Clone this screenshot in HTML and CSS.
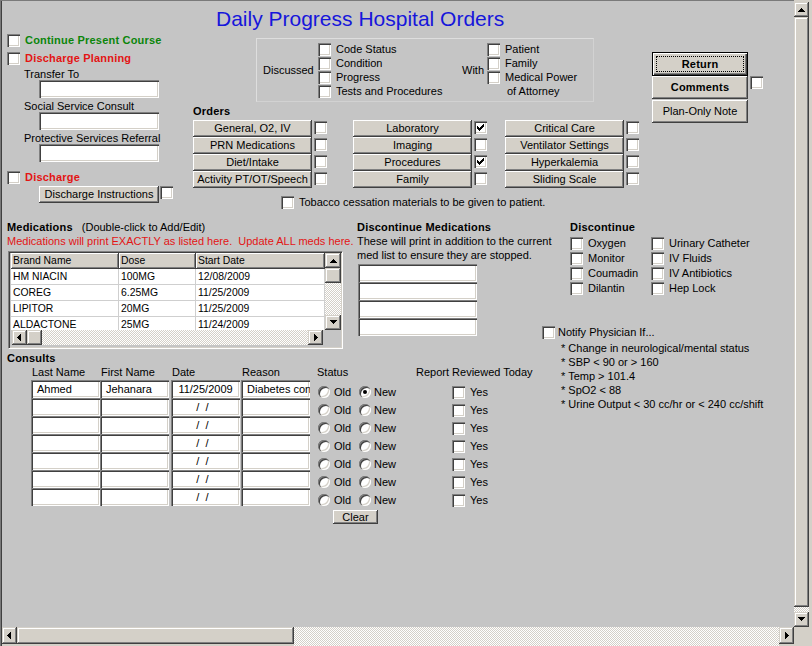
FILE: index.html
```html
<!DOCTYPE html>
<html>
<head>
<meta charset="utf-8">
<title>Daily Progress Hospital Orders</title>
<link rel="stylesheet" href="styles.css">
</head>
<body>
<div class="window">
 <div class="content">
  <h1 class="title">Daily Progress Hospital Orders</h1>
  <div class="top">
   <div class="left-col">
    <div class="cbrow lc1"><span class="cb"></span><span class="lbl bold green">Continue Present Course</span></div>
    <div class="cbrow lc2"><span class="cb"></span><span class="lbl bold red">Discharge Planning</span></div>
    <div class="flabel fl1">Transfer To</div>
    <div class="inp wide"></div>
    <div class="flabel">Social Service Consult</div>
    <div class="inp wide"></div>
    <div class="flabel">Protective Services Referral</div>
    <div class="inp wide"></div>
    <div class="cbrow lc3"><span class="cb"></span><span class="lbl bold red">Discharge</span></div>
    <div class="dirow"><div class="btn di">Discharge Instructions</div><span class="cb"></span></div>
   </div>
   <div class="mid-col">
    <div class="discussed">
     <div class="dlabel">Discussed</div>
     <div class="dcol dcol1">
      <div class="cbrow"><span class="cb"></span><span class="lbl">Code Status</span></div>
      <div class="cbrow"><span class="cb"></span><span class="lbl">Condition</span></div>
      <div class="cbrow"><span class="cb"></span><span class="lbl">Progress</span></div>
      <div class="cbrow"><span class="cb"></span><span class="lbl">Tests and Procedures</span></div>
     </div>
     <div class="dlabel dwith">With</div>
     <div class="dcol">
      <div class="cbrow"><span class="cb"></span><span class="lbl">Patient</span></div>
      <div class="cbrow"><span class="cb"></span><span class="lbl">Family</span></div>
      <div class="cbrow"><span class="cb"></span><span class="lbl">Medical Power</span></div>
      <div class="cbrow"><span class="attorney">of Attorney</span></div>
     </div>
    </div>
    <div class="bold orders-h">Orders</div>
    <div class="orders">
     <div class="ogroup">
      <div class="orow"><div class="btn ob">General, O2, IV</div><span class="cb"></span></div>
      <div class="orow"><div class="btn ob">PRN Medications</div><span class="cb"></span></div>
      <div class="orow"><div class="btn ob">Diet/Intake</div><span class="cb"></span></div>
      <div class="orow"><div class="btn ob">Activity PT/OT/Speech</div><span class="cb"></span></div>
     </div>
     <div class="ogroup g2">
      <div class="orow"><div class="btn ob">Laboratory</div><span class="cb"><svg class="chk" width="13" height="13" viewBox="0 0 13 13"><path d="M3 5h1v1h1v1h1V6h1V5h1V4h1V3h1v3h-1v1h-1v1h-1v1h-1v1h-1V9h-1V8h-1z"/></svg></span></div>
      <div class="orow"><div class="btn ob">Imaging</div><span class="cb"></span></div>
      <div class="orow"><div class="btn ob">Procedures</div><span class="cb"><svg class="chk" width="13" height="13" viewBox="0 0 13 13"><path d="M3 5h1v1h1v1h1V6h1V5h1V4h1V3h1v3h-1v1h-1v1h-1v1h-1v1h-1V9h-1V8h-1z"/></svg></span></div>
      <div class="orow"><div class="btn ob">Family</div><span class="cb"></span></div>
     </div>
     <div class="ogroup g3">
      <div class="orow"><div class="btn ob">Critical Care</div><span class="cb"></span></div>
      <div class="orow"><div class="btn ob">Ventilator Settings</div><span class="cb"></span></div>
      <div class="orow"><div class="btn ob">Hyperkalemia</div><span class="cb"></span></div>
      <div class="orow"><div class="btn ob">Sliding Scale</div><span class="cb"></span></div>
     </div>
    </div>
    <div class="cbrow tobacco"><span class="cb"></span><span class="lbl">Tobacco cessation materials to be given to patient.</span></div>
   </div>
   <div class="right-col">
    <div class="btn ret bold">Return</div>
    <div class="crow"><div class="btn cmt bold">Comments</div><span class="cb"></span></div>
    <div class="btn plan">Plan-Only Note</div>
   </div>
  </div>

  <div class="lower">
   <div class="lower-left">
    <div class="meds-row">
     <div class="meds">
      <div class="mh"><span class="bold">Medications</span><span class="mhint">(Double-click to Add/Edit)</span></div>
      <div class="redline">Medications will print EXACTLY as listed here.&nbsp; Update ALL meds here.</div>
      <div class="grid">
       <div class="gview">
        <div class="gtable">
         <div class="grow ghead"><div class="gc c1">Brand Name</div><div class="gc c2">Dose</div><div class="gc c3">Start Date</div></div>
         <div class="grow"><div class="gc c1">HM NIACIN</div><div class="gc c2">100MG</div><div class="gc c3">12/08/2009</div></div>
         <div class="grow"><div class="gc c1">COREG</div><div class="gc c2">6.25MG</div><div class="gc c3">11/25/2009</div></div>
         <div class="grow"><div class="gc c1">LIPITOR</div><div class="gc c2">20MG</div><div class="gc c3">11/25/2009</div></div>
         <div class="grow"><div class="gc c1">ALDACTONE</div><div class="gc c2">25MG</div><div class="gc c3">11/24/2009</div></div>
        </div>
        <div class="gvs">
         <div class="sb gsb"><svg width="16" height="15" viewBox="0 0 15 15"><path d="M7 6h1v1h1v1h1v1h1v1H4V9h1V8h1V7h1z"/></svg></div>
         <div class="sb gthumb"></div>
         <div class="hatch fill"></div>
         <div class="sb gsb"><svg width="16" height="15" viewBox="0 0 15 15"><path d="M4 5h7v1h-1v1h-1v1h-1v1H7V8H6V7H5V6H4z"/></svg></div>
        </div>
       </div>
       <div class="ghs">
        <div class="sb ghb"><svg width="15" height="15" viewBox="0 0 15 15"><path d="M5 7h1V6h1V5h1V4h1v7H8v-1H7V9H6V8H5z"/></svg></div>
        <div class="sb ghthumb"></div>
        <div class="hatch fill"></div>
        <div class="sb ghb"><svg width="15" height="15" viewBox="0 0 15 15"><path d="M6 4h1v1h1v1h1v1h1v1H9v1H8v1H7v1H6z"/></svg></div>
       </div>
      </div>
     </div>
     <div class="dmeds">
      <div class="bold dh">Discontinue Medications</div>
      <div class="dtext">These will print in addition to the current<br>med list to ensure they are stopped.</div>
      <div class="inp dm dm1"></div>
      <div class="inp dm"></div>
      <div class="inp dm"></div>
      <div class="inp dm"></div>
     </div>
    </div>

    <div class="consults">
     <div class="bold ch-title">Consults</div>
     <div class="chead">
      <div class="hc hc1">Last Name</div>
      <div class="hc hc2">First Name</div>
      <div class="hc hc3">Date</div>
      <div class="hc hc4">Reason</div>
      <div class="hc hc5">Status</div>
      <div class="hc hc6">Report Reviewed Today</div>
     </div>
     <div class="cbody">
      <div class="cfields">
       <div class="frow"><div class="inp f1">Ahmed</div><div class="inp f2">Jehanara</div><div class="inp f3">11/25/2009</div><div class="inp f4">Diabetes control</div></div>
       <div class="frow"><div class="inp f1"></div><div class="inp f2"></div><div class="inp f3">  /  /    </div><div class="inp f4"></div></div>
       <div class="frow"><div class="inp f1"></div><div class="inp f2"></div><div class="inp f3">  /  /    </div><div class="inp f4"></div></div>
       <div class="frow"><div class="inp f1"></div><div class="inp f2"></div><div class="inp f3">  /  /    </div><div class="inp f4"></div></div>
       <div class="frow"><div class="inp f1"></div><div class="inp f2"></div><div class="inp f3">  /  /    </div><div class="inp f4"></div></div>
       <div class="frow"><div class="inp f1"></div><div class="inp f2"></div><div class="inp f3">  /  /    </div><div class="inp f4"></div></div>
       <div class="frow"><div class="inp f1"></div><div class="inp f2"></div><div class="inp f3">  /  /    </div><div class="inp f4"></div></div>
      </div>
      <div class="cstatus">
       <div class="srow"><span class="rb"></span><span class="rl old">Old</span><span class="rb on"></span><span class="rl">New</span></div>
       <div class="srow"><span class="rb"></span><span class="rl old">Old</span><span class="rb"></span><span class="rl">New</span></div>
       <div class="srow"><span class="rb"></span><span class="rl old">Old</span><span class="rb"></span><span class="rl">New</span></div>
       <div class="srow"><span class="rb"></span><span class="rl old">Old</span><span class="rb"></span><span class="rl">New</span></div>
       <div class="srow"><span class="rb"></span><span class="rl old">Old</span><span class="rb"></span><span class="rl">New</span></div>
       <div class="srow"><span class="rb"></span><span class="rl old">Old</span><span class="rb"></span><span class="rl">New</span></div>
       <div class="srow"><span class="rb"></span><span class="rl old">Old</span><span class="rb"></span><span class="rl">New</span></div>
       <div class="btn clear">Clear</div>
      </div>
      <div class="creport">
       <div class="yrow"><span class="cb"></span><span class="lbl">Yes</span></div>
       <div class="yrow"><span class="cb"></span><span class="lbl">Yes</span></div>
       <div class="yrow"><span class="cb"></span><span class="lbl">Yes</span></div>
       <div class="yrow"><span class="cb"></span><span class="lbl">Yes</span></div>
       <div class="yrow"><span class="cb"></span><span class="lbl">Yes</span></div>
       <div class="yrow"><span class="cb"></span><span class="lbl">Yes</span></div>
       <div class="yrow"><span class="cb"></span><span class="lbl">Yes</span></div>
      </div>
     </div>
    </div>
   </div>

   <div class="lower-right">
    <div class="disc">
     <div class="bold dh">Discontinue</div>
     <div class="dgrid">
      <div class="cbrow"><span class="cb"></span><span class="lbl">Oxygen</span></div>
      <div class="cbrow"><span class="cb"></span><span class="lbl">Urinary Catheter</span></div>
      <div class="cbrow"><span class="cb"></span><span class="lbl">Monitor</span></div>
      <div class="cbrow"><span class="cb"></span><span class="lbl">IV Fluids</span></div>
      <div class="cbrow"><span class="cb"></span><span class="lbl">Coumadin</span></div>
      <div class="cbrow"><span class="cb"></span><span class="lbl">IV Antibiotics</span></div>
      <div class="cbrow"><span class="cb"></span><span class="lbl">Dilantin</span></div>
      <div class="cbrow"><span class="cb"></span><span class="lbl">Hep Lock</span></div>
     </div>
    </div>
    <div class="cbrow notify"><span class="cb"></span><span class="lbl">Notify Physician If...</span></div>
    <div class="nlist">
     <div>* Change in neurological/mental status</div>
     <div>* SBP &lt; 90 or &gt; 160</div>
     <div>* Temp &gt; 101.4</div>
     <div>* SpO2 &lt; 88</div>
     <div>* Urine Output &lt; 30 cc/hr or &lt; 240 cc/shift</div>
    </div>
   </div>
  </div>
 </div>

 <div class="vscroll">
  <div class="sb vb"><svg width="15" height="15" viewBox="0 0 15 15"><path d="M7 6h1v1h1v1h1v1h1v1H4V9h1V8h1V7h1z"/></svg></div>
  <div class="sb vthumb"></div>
  <div class="hatch fill"></div>
  <div class="sb vb"><svg width="15" height="15" viewBox="0 0 15 15"><path d="M4 5h7v1h-1v1h-1v1h-1v1H7V8H6V7H5V6H4z"/></svg></div>
 </div>
 <div class="hscroll">
  <div class="sb hb"><svg width="15" height="17" viewBox="0 -1 15 17"><path d="M5 7h1V6h1V5h1V4h1v7H8v-1H7V9H6V8H5z"/></svg></div>
  <div class="sb hthumb"></div>
  <div class="hatch fill"></div>
  <div class="sb hb"><svg width="15" height="17" viewBox="0 -1 15 17"><path d="M6 4h1v1h1v1h1v1h1v1H9v1H8v1H7v1H6z"/></svg></div>
 </div>
 <div class="corner"></div>
</div>
</body>
</html>
```

FILE: styles.css
```css
* { box-sizing: border-box; }
html, body { margin: 0; padding: 0; }
body {
  width: 812px; height: 646px; overflow: hidden;
  background: #c5c5c5;
  font-family: "Liberation Sans", Arial, sans-serif;
  font-size: 11px; color: #000;
}
.window {
  display: grid;
  grid-template-columns: 794px 18px;
  grid-template-rows: 627px 19px;
  width: 812px; height: 646px;
}
.content {
  min-width: 0; overflow: hidden;
  box-shadow: inset 1px 1px #7a7a7a, inset 2px 0 #404040;
}
.title {
  margin: 0; padding: 7px 0 0 216px; height: 31px;
  font-size: 21px; line-height: 24px; font-weight: normal;
  color: #1616db; white-space: nowrap;
}
.bold { font-weight: bold; letter-spacing: 0.2px; }
.green { color: #0b850b; }
.red { color: #e31414; }

/* controls */
.cb {
  position: relative; display: block; flex: none;
  width: 13px; height: 13px; background: #fff;
  box-shadow: inset 1px 1px #808080, inset 2px 2px #404040, inset -1px -1px #fff, inset -2px -2px #d4d0c8;
}
.chk { position: absolute; left: 0; top: 0; shape-rendering: crispEdges; }
.rb {
  position: relative; display: block; flex: none;
  width: 12px; height: 12px; border-radius: 50%; background: #fff;
  box-shadow: inset 1px 1px #808080, inset 2px 2px #404040, inset -1px -1px #fff, inset -2px -2px #d4d0c8;
}
.rb.on::after {
  content: ""; position: absolute; left: 4px; top: 4px;
  width: 4px; height: 4px; border-radius: 50%; background: #000;
}
.inp {
  background: #fff; flex: none;
  box-shadow: inset 1px 1px #808080, inset 2px 2px #404040, inset -1px -1px #fff, inset -2px -2px #d4d0c8;
  padding: 0 3px 0 6px; line-height: 18px; height: 18px;
  white-space: pre; overflow: hidden;
}
.btn {
  display: flex; align-items: center; justify-content: center; flex: none;
  background: #d4d0c8; white-space: nowrap; line-height: 13px;
  box-shadow: inset -1px -1px #404040, inset 1px 1px #fff, inset -2px -2px #808080;
}
.sb {
  background: #d4d0c8; flex: none;
  box-shadow: inset -1px -1px #404040, inset 1px 1px #d4d0c8, inset -2px -2px #808080, inset 2px 2px #fff;
}
.sb svg { display: block; shape-rendering: crispEdges; }
.hatch {
  background-color: #fff;
  background-image: repeating-conic-gradient(#d4d0c8 0 25%, #fff 0 50%);
  background-size: 2px 2px;
}
.fill { flex: 1 1 auto; }

.cbrow { display: flex; align-items: flex-start; height: 13px; line-height: 13px; white-space: nowrap; }
.lbl { margin-left: 5px; white-space: nowrap; }

/* top area */
.top { display: flex; align-items: flex-start; }
.left-col { width: 193px; flex: none; display: flex; flex-direction: column; align-items: flex-start; }
.mid-col { width: 459px; flex: none; display: flex; flex-direction: column; align-items: flex-start; }
.right-col { flex: none; display: flex; flex-direction: column; align-items: flex-start; padding-top: 21px; }

.lc1 { margin: 3px 0 0 7px; }
.lc2 { margin: 5px 0 0 7px; }
.lc3 { margin: 9px 0 0 7px; }
.flabel { margin: 2px 0 0 24px; height: 12px; line-height: 12px; white-space: nowrap; }
.fl1 { margin-top: 3px; }
.inp.wide { margin-left: 39px; width: 120px; }
.dirow { display: flex; align-items: flex-start; margin: 2px 0 0 39px; }
.btn.di { width: 120px; height: 17px; }
.dirow .cb { margin-left: 1px; }

.discussed {
  margin: 7px 0 0 63px; width: 338px; height: 64px;
  border: 1px solid #dedede; border-right-color: #d2d2d2; border-bottom-color: #d2d2d2;
  display: flex; align-items: center; padding: 3px 0 3px 6px;
}
.dlabel { width: 55px; flex: none; line-height: 13px; }
.dwith { width: 25px; }
.dcol { display: flex; flex-direction: column; gap: 1px; }
.dcol1 { width: 144px; flex: none; }
.attorney { padding-left: 20px; }

.orders-h { margin-top: 3px; height: 13px; line-height: 13px; }
.orders { display: flex; margin-top: 2px; }
.ogroup { display: flex; flex-direction: column; }
.g2 { margin-left: 26px; }
.g3 { margin-left: 18px; }
.orow { display: flex; align-items: flex-start; height: 17px; }
.btn.ob { width: 119px; height: 17px; }
.orow .cb { margin: 1px 0 0 2px; }
.tobacco { margin: 8px 0 0 88px; }

.btn.ret {
  position: relative; width: 96px; height: 24px;
  box-shadow: inset 0 0 0 1px #000, inset 2px 2px #fff, inset -2px -2px #404040, inset -3px -3px #808080;
}
.btn.ret::after {
  content: ""; position: absolute; left: 4px; top: 4px; right: 4px; bottom: 4px;
  border: 1px dotted #000;
}
.crow { display: flex; align-items: flex-start; }
.crow .cb { margin-left: 2px; }
.btn.cmt { width: 96px; height: 23px; }
.btn.plan { width: 96px; height: 23px; margin-top: 1px; }

/* lower area */
.lower { display: flex; align-items: flex-start; margin-top: 12px; }
.lower-left { width: 542px; flex: none; }
.lower-right { flex: none; width: 252px; }
.meds-row { display: flex; align-items: flex-start; }
.meds { margin-left: 7px; width: 336px; flex: none; }
.mh { height: 13px; line-height: 13px; white-space: nowrap; }
.mhint { margin-left: 9px; }
.redline { margin-top: 1px; height: 13px; line-height: 13px; color: #e31414; white-space: nowrap; }
.grid {
  margin: 3px 0 0 1px; width: 335px; height: 98px;
  border: 1px solid; border-color: #808080 #fff #fff #808080;
  box-shadow: inset 1px 1px #404040, inset -1px -1px #d4d0c8;
  padding: 1px 1px 1px 2px;
}
.gview { display: flex; height: 77px; }
.gtable { width: 314px; height: 77px; overflow: hidden; background: #fff; flex: none; font-size: 10.4px; }
.grow { display: flex; height: 16px; }
.gc {
  flex: none; height: 16px; padding-left: 2px; line-height: 15px;
  border-right: 1px solid #cfcfcf; border-bottom: 1px solid #cfcfcf;
  white-space: nowrap; overflow: hidden;
}
.c1 { width: 108px; }
.c2 { width: 77px; }
.c3 { width: 129px; }
.ghead .gc {
  background: #d4d0c8; border: none; line-height: 16px;
  box-shadow: inset -1px -1px #404040, inset 1px 1px #fff, inset -2px -2px #808080;
}
.gvs { width: 16px; height: 77px; display: flex; flex-direction: column; }
.gsb { width: 16px; height: 15px; }
.gthumb { width: 16px; height: 15px; }
.ghs { display: flex; margin-left: 1px; width: 311px; height: 15px; }
.ghb { width: 15px; height: 15px; }
.ghthumb { width: 15px; height: 15px; }

.dmeds { margin-left: 14px; flex: none; }
.dh { height: 13px; line-height: 13px; white-space: nowrap; }
.dtext { line-height: 14px; white-space: nowrap; }
.inp.dm { width: 119px; margin-left: 1px; }
.dm1 { margin-top: 2px; }

.consults { margin: 3px 0 0 7px; }
.ch-title { height: 13px; line-height: 13px; }
.chead { display: flex; margin-top: 1px; height: 13px; line-height: 13px; white-space: nowrap; }
.hc { flex: none; padding-left: 1px; }
.hc1 { margin-left: 24px; width: 69px; }
.hc2 { width: 71px; }
.hc3 { width: 70px; }
.hc4 { width: 76px; }
.hc5 { width: 98px; padding-left: 0; }
.cbody { display: flex; align-items: flex-start; margin-top: 1px; }
.cfields { margin-left: 24px; flex: none; }
.frow { display: flex; height: 18px; }
.inp.f1, .inp.f2, .inp.f3, .inp.f4 { width: 69px; }
.inp.f3 { margin-left: 2px; text-align: center; padding: 0 2px; }
.inp.f4 { margin-left: 1px; }
.cstatus { margin-left: 7px; width: 98px; flex: none; padding-top: 3px; }
.srow { display: flex; align-items: center; height: 18px; line-height: 13px; }
.srow .rb { margin-left: 1px; }
.rl { margin-left: 3px; }
.rl.old { margin-left: 4px; width: 24px; }
.btn.clear { margin: 1px 0 0 16px; width: 45px; height: 14px; line-height: 12px; }
.creport { flex: none; padding-top: 3px; }
.yrow { display: flex; align-items: center; height: 18px; line-height: 13px; }
.yrow .cb { margin-left: 37px; }

.disc { margin-left: 28px; }
.dgrid { display: grid; grid-template-columns: 81px auto; grid-auto-rows: 15px; margin-top: 3px; }
.notify { margin-top: 29px; }
.notify .lbl { margin-left: 3px; }
.nlist { margin: 2px 0 0 19px; line-height: 14px; white-space: nowrap; }

/* window scrollbars */
.vscroll {
  grid-column: 2; grid-row: 1;
  background: #d4d0c8; display: flex; flex-direction: column;
  padding: 2px 3px 0 0;
}
.vb { width: 15px; height: 15px; }
.vthumb { width: 15px; height: 590px; }
.vscroll .hatch { width: 15px; }
.hscroll {
  grid-column: 1; grid-row: 2;
  display: flex; align-items: flex-start; padding-left: 2px;
  background: #d4d0c8;
  box-shadow: inset 1px 0 #7a7a7a, inset 2px 0 #404040;
}
.hb { width: 15px; height: 17px; }
.hthumb { width: 277px; height: 17px; }
.hscroll .hatch { height: 19px; }
.corner { grid-column: 2; grid-row: 2; background: #d4d0c8; }
```
